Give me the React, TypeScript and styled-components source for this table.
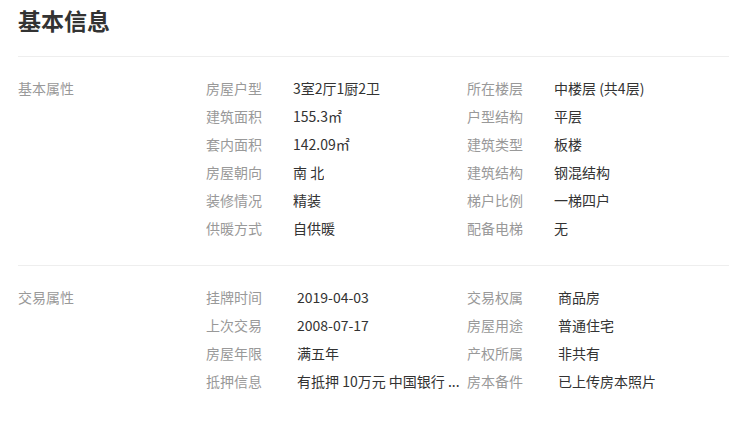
import React from "react";
import styled, { createGlobalStyle } from "styled-components";

const GlobalStyle = createGlobalStyle`
  html, body { margin: 0; padding: 0; background: #fff; }
  body { font-family: "Noto Sans CJK SC", "Noto Sans", sans-serif; }
`;

const Page = styled.div`
  padding: 0 20px 0 18px;
`;

const Title = styled.h2`
  margin: 0;
  height: 40px;
  line-height: 40px;
  font-size: 23px;
  font-weight: 700;
  color: #333;
  border-bottom: 1px solid #eee;
  padding-bottom: 16px;
`;

const Section = styled.div<{ $last?: boolean }>`
  display: flex;
  padding: 17px 0 ${(p) => (p.$last ? "0" : "23px")};
  border-bottom: ${(p) => (p.$last ? "none" : "1px solid #eee")};
`;

const SectionLabel = styled.div`
  width: 188px;
  flex: none;
  font-size: 14px;
  line-height: 28px;
  color: #999;
`;

const Grid = styled.div`
  flex: 1;
  display: grid;
  grid-template-columns: 261px 1fr;
`;

const Item = styled.div`
  display: flex;
  height: 28px;
  line-height: 28px;
  font-size: 14px;
  white-space: nowrap;
  overflow: hidden;
`;

const Label = styled.span<{ $w: number }>`
  width: ${(p) => p.$w}px;
  flex: none;
  color: #999;
`;

const Value = styled.span`
  color: #333;
  overflow: hidden;
`;

type Pair = [string, string];

const basic: Pair[] = [
  ["房屋户型", "3室2厅1厨2卫"],
  ["所在楼层", "中楼层 (共4层)"],
  ["建筑面积", "155.3㎡"],
  ["户型结构", "平层"],
  ["套内面积", "142.09㎡"],
  ["建筑类型", "板楼"],
  ["房屋朝向", "南 北"],
  ["建筑结构", "钢混结构"],
  ["装修情况", "精装"],
  ["梯户比例", "一梯四户"],
  ["供暖方式", "自供暖"],
  ["配备电梯", "无"],
];

const trade: Pair[] = [
  ["挂牌时间", "2019-04-03"],
  ["交易权属", "商品房"],
  ["上次交易", "2008-07-17"],
  ["房屋用途", "普通住宅"],
  ["房屋年限", "满五年"],
  ["产权所属", "非共有"],
  ["抵押信息", "有抵押 10万元 中国银行 ..."],
  ["房本备件", "已上传房本照片"],
];

function Block({ name, items, labelW, last }: { name: string; items: Pair[]; labelW: number; last?: boolean }) {
  return (
    <Section $last={last}>
      <SectionLabel>{name}</SectionLabel>
      <Grid>
        {items.map(([k, v]) => (
          <Item key={k}>
            <Label $w={labelW}>{k}</Label>
            <Value>{v}</Value>
          </Item>
        ))}
      </Grid>
    </Section>
  );
}

export default function App() {
  return (
    <Page>
      <GlobalStyle />
      <Title>基本信息</Title>
      <Block name="基本属性" items={basic} labelW={87} />
      <Block name="交易属性" items={trade} labelW={91} last />
    </Page>
  );
}
